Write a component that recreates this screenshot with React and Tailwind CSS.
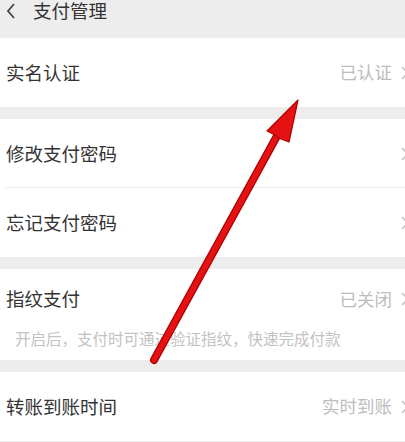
import React from 'react';

const font = { fontFamily: '"Noto Sans CJK SC", "Noto Sans", sans-serif' };

// right chevron, mostly clipped by the screen edge in the reference
const Chevron = () => (
    <svg className="shrink-0 ml-[8px] mr-[-5px]" width="10" height="16" viewBox="0 0 10 16" fill="none">
        <path d="M2 2 L8 8 L2 14" stroke="#c4c4c4" strokeWidth="1.6" />
    </svg>
);

const Row = ({ label, value, divider }) => (
    <div className="relative bg-white h-[69px] flex items-center pl-[6px]">
        <span className="text-[18.5px] text-[#333] flex-1">{label}</span>
        {value && <span className="text-[17.5px] text-[#bdbdbd]">{value}</span>}
        <Chevron />
        {divider && <div className="absolute left-[5px] right-0 bottom-0 h-px bg-[#ececec]" />}
    </div>
);

export default function App() {
    return (
        <div className="relative w-[405px] h-[442px] overflow-hidden bg-[#ededed]" style={font}>
            {/* header */}
            <div className="h-[38px] flex items-start gap-[16px] pl-[5px]">
                <svg className="mt-[3px]" width="12" height="16" viewBox="0 0 12 16" fill="none">
                    <path d="M9 1 L3 8 L9 15" stroke="#444" strokeWidth="1.8" />
                </svg>
                <span className="text-[18.5px] leading-[21px] text-[#333]">支付管理</span>
            </div>

            <div className="flex flex-col gap-[12px]">
                <Row label="实名认证" value="已认证" />
                <div>
                    <Row label="修改支付密码" divider />
                    <Row label="忘记支付密码" />
                </div>
                <div className="bg-white h-[91px] flex flex-col">
                    <div className="h-[60px] flex items-center pl-[6px]">
                        <span className="text-[18.5px] text-[#333] flex-1">指纹支付</span>
                        <span className="text-[17.5px] text-[#bdbdbd]">已关闭</span>
                        <Chevron />
                    </div>
                    <div className="pl-[15px] text-[15.5px] leading-[18px] text-[#c2c2c2]">
                        开启后，支付时可通过验证指纹，快速完成付款
                    </div>
                </div>
                <Row label="转账到账时间" value="实时到账" />
            </div>

            {/* red annotation arrow */}
            <svg className="absolute inset-0 pointer-events-none" width="405" height="442" viewBox="0 0 405 442">
                <line x1="154" y1="360" x2="277" y2="136" stroke="#b00000" strokeWidth="8" strokeLinecap="round" />
                <line x1="154" y1="360" x2="277" y2="136" stroke="#e41212" strokeWidth="5.5" strokeLinecap="round" />
                <polygon points="298,100 267,131 273,134 281,139 289,142" fill="#e41212" stroke="#b00000" strokeWidth="1.2" strokeLinejoin="round" />
            </svg>
        </div>
    );
}
